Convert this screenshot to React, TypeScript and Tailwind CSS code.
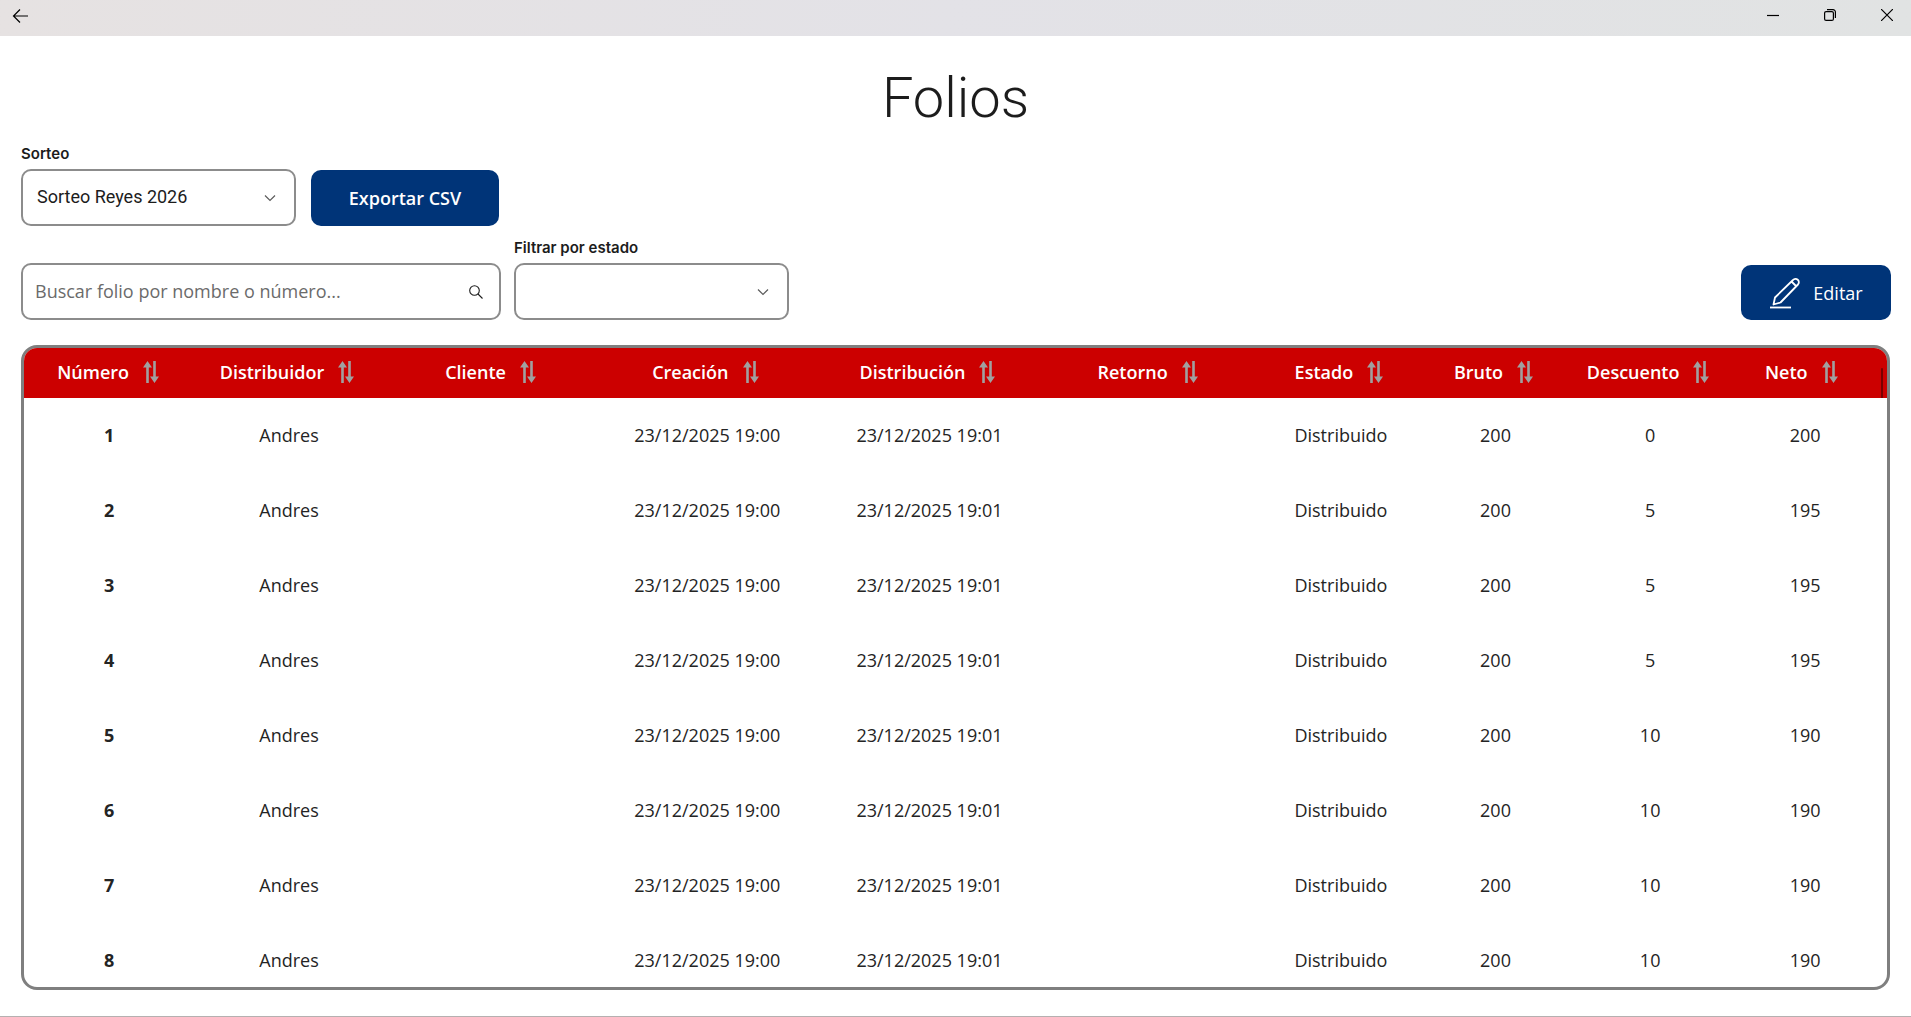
import React from "react";

type Column = { label: string; width: string };

const columns: Column[] = [
  { label: "Número", width: "w-[8.6%]" },
  { label: "Distribuidor", width: "w-[11.25%]" },
  { label: "Cliente", width: "w-[10.6%]" },
  { label: "Creación", width: "w-[12.46%]" },
  { label: "Distribución", width: "w-[11.39%]" },
  { label: "Retorno", width: "w-[12.24%]" },
  { label: "Estado", width: "w-[8.3%]" },
  { label: "Bruto", width: "w-[8.3%]" },
  { label: "Descuento", width: "w-[8.3%]" },
  { label: "Neto", width: "w-[8.56%]" },
];

const discounts = [0, 5, 5, 5, 10, 10, 10, 10];

const rows = discounts.map((discount, i) => [
  String(i + 1),
  "Andres",
  "",
  "23/12/2025 19:00",
  "23/12/2025 19:01",
  "",
  "Distribuido",
  "200",
  String(discount),
  String(200 - discount),
]);

function SortIcon() {
  return (
    <svg className="h-[22px] w-4 shrink-0" viewBox="0 0 16 22" fill="#a0a0a0" aria-hidden="true">
      <path d="M4.500 0 9 6.500H5.800V22H3.200V6.500H0Z" />
      <path d="M12.800 0V15.500H16L11.500 22 7 15.500H10.200V0Z" />
    </svg>
  );
}

function ChevronIcon() {
  return (
    <svg
      className="pointer-events-none absolute top-1/2 right-5 h-3 w-3 -translate-y-1/2"
      viewBox="0 0 12 12"
      fill="none"
      stroke="#5c5c5c"
      strokeWidth="1.2"
      aria-hidden="true"
    >
      <path d="M1 3.500 6 8.500 11 3.500" />
    </svg>
  );
}

function Picker({ id, label, options }: { id: string; label: string; options: string[] }) {
  return (
    <div className="flex w-[275px] flex-col gap-[5px]">
      <label htmlFor={id} className="font-[Inter] text-[15px] leading-5 font-semibold">
        {label}
      </label>
      <div className="relative">
        <select
          id={id}
          className="h-[57px] w-full appearance-none rounded-[10px] border-2 border-[#8c8c8c] bg-white px-3.5 pb-0.5 font-[Roboto] text-lg"
        >
          {options.map((o) => (
            <option key={o}>{o}</option>
          ))}
        </select>
        <ChevronIcon />
      </div>
    </div>
  );
}

export default function App() {
  return (
    <div className="flex h-screen flex-col overflow-hidden border-b border-[#b5b0b0] bg-white font-['Open_Sans',sans-serif] text-[#1c1c1c]">
      <header className="flex h-9 shrink-0 items-center justify-between bg-linear-to-r from-[#e6e2e2] via-[#e3e2e7] to-[#e1e3e3] text-black">
        <button aria-label="Atrás" className="px-3 pb-1">
          <svg className="h-4 w-4" viewBox="0 0 16 16" fill="none" stroke="currentColor" strokeWidth="1.2">
            <path d="M16 8H1.500M8 1.500 1.500 8 8 14.500" />
          </svg>
        </button>
        <div className="-mr-1 flex pb-1.5">
          <button aria-label="Minimizar" className="flex w-[57px] justify-center">
            <svg className="h-3 w-3" viewBox="0 0 12 12" stroke="currentColor" strokeWidth="1.2">
              <path d="M0 6.500H12" />
            </svg>
          </button>
          <button aria-label="Restaurar" className="flex w-[57px] justify-center">
            <svg className="h-3 w-3" viewBox="0 0 12 12" fill="none" stroke="currentColor" strokeWidth="1.2">
              <rect x=".6" y="2.6" width="8.8" height="8.8" rx="1.5" />
              <path d="M3 .6H9a2.400 2.400 0 0 1 2.400 2.400V9" />
            </svg>
          </button>
          <button aria-label="Cerrar" className="flex w-[57px] justify-center">
            <svg className="h-3 w-3" viewBox="0 0 12 12" stroke="currentColor" strokeWidth="1.2">
              <path d="M0 0 12 12M12 0 0 12" />
            </svg>
          </button>
        </div>
      </header>

      <main className="flex min-h-0 flex-1 flex-col px-[21px] pt-7 pb-[26px]">
        <h1 className="text-center font-[Roboto] text-[56px] leading-[68px] font-light">Folios</h1>

        <div className="mt-3 flex items-end gap-[15px]">
          <Picker id="sorteo" label="Sorteo" options={["Sorteo Reyes 2026"]} />
          <button className="h-14 w-[188px] rounded-[10px] bg-[#003478] text-lg font-semibold text-white">
            Exportar CSV
          </button>
        </div>

        <div className="mt-3 flex items-end gap-[13px]">
          <div className="relative w-[480px]">
            <input
              type="text"
              aria-label="Buscar folio"
              placeholder="Buscar folio por nombre o número..."
              className="h-[57px] w-full rounded-[10px] border-2 border-[#8c8c8c] bg-white pr-12 pb-0.5 pl-3 text-lg placeholder:text-[#6b6b6b]"
            />
            <svg
              className="pointer-events-none absolute top-1/2 right-[17px] h-4 w-4 -translate-y-1/2"
              viewBox="0 0 16 16"
              fill="none"
              stroke="#1c1c1c"
              strokeWidth="1.1"
              aria-hidden="true"
            >
              <circle cx="6.500" cy="6.500" r="4.800" />
              <path d="m10 10 4.500 4.500" />
            </svg>
          </div>
          <Picker id="estado" label="Filtrar por estado" options={[""]} />
          <button className="-mr-px ml-auto flex h-[55px] w-[150px] items-center justify-center gap-3 rounded-[10px] bg-[#003478] text-lg text-white">
            <svg className="h-8 w-8" viewBox="0 0 32 32" fill="none" stroke="currentColor" strokeWidth="1.8" aria-hidden="true">
              <path d="M1 30.500H22" />
              <path d="M4.500 27.500 6 20.500 24 3a3.300 3.300 0 0 1 5 4.500L11.500 25.500ZM22.500 4.500 27.500 9.500" strokeLinejoin="round" />
            </svg>
            Editar
          </button>
        </div>

        <div className="relative mt-[25px] min-h-0 flex-1 overflow-hidden rounded-2xl border-3 border-[#7f7f7f]">
          <div className="absolute top-5 right-1 h-[30px] w-0.5 rounded-t-full bg-[#7a0000]" />
          <table className="w-full table-fixed text-center text-lg">
            <thead className="bg-[#cc0000] text-white">
              <tr className="h-[50px]">
                {columns.map((c) => (
                  <th key={c.label} scope="col" className={`${c.width} p-0 pr-1 pb-1 font-semibold first:pl-3 last:pr-3`}>
                    <button className="inline-flex items-center gap-3.5 align-middle">
                      {c.label}
                      <SortIcon />
                    </button>
                  </th>
                ))}
              </tr>
            </thead>
            <tbody className="text-[#242424]">
              {rows.map((row) => (
                <tr key={row[0]} className="h-[75px]">
                  {row.map((cell, i) => (
                    <td key={columns[i].label} className="p-0 pb-0.5 first:pl-2.5 first:font-bold last:pr-1">
                      {cell}
                    </td>
                  ))}
                </tr>
              ))}
            </tbody>
          </table>
        </div>
      </main>
    </div>
  );
}
